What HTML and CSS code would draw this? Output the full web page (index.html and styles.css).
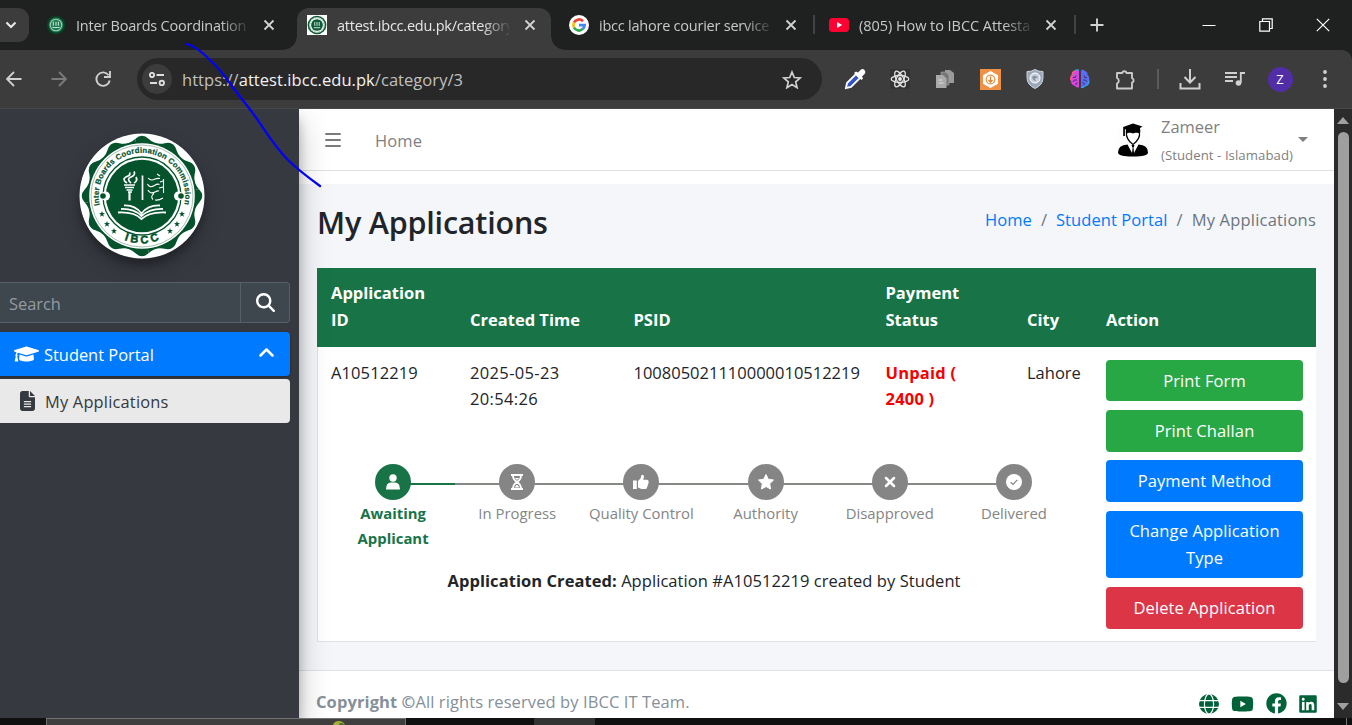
FILE: index.html
```html
<!DOCTYPE html>
<html lang="en">
<head>
<meta charset="utf-8">
<title>My Applications</title>
<link rel="stylesheet" href="styles.css">
</head>
<body>
<svg class="defs" width="0" height="0">
  <defs>
    <path id="lobes" d="M57.100-6.800Q63.500 0 57.100 6.800Q50.710 13.590 52.850 22.670Q54.990 31.750 46.060 34.440Q37.120 37.120 34.440 46.060Q31.750 54.990 22.670 52.850Q13.590 50.710 6.800 57.100L0 0z"/>
    <symbol id="seal" viewBox="-63 -63 126 126">
      <circle r="62.500" fill="#fff"/>
      <g fill="#05532d"><circle r="54.500"/><use href="#lobes"/><use href="#lobes" transform="rotate(90)"/><use href="#lobes" transform="rotate(180)"/><use href="#lobes" transform="rotate(270)"/></g>
      <circle r="52.800" fill="#fff"/>
      <circle r="51" fill="none" stroke="#7fa892" stroke-width=".7"/>
      <circle r="39" fill="none" stroke="#05532d" stroke-width="1.300"/>
      <circle r="36.200" fill="#05532d"/>
      <circle cx="-36.500" r="4.500" fill="#fff"/><circle cx="36.500" r="4.500" fill="#fff"/>
      <circle cx="-39" r="2.800" fill="#05532d"/><circle cx="39" r="2.800" fill="#05532d"/>
    </symbol>
    <symbol id="x" viewBox="0 0 12 12"><path d="M1.500 1.500l9 9M10.500 1.500l-9 9" stroke="currentColor" stroke-width="1.800" fill="none"/></symbol>
  </defs>
</svg>

<div class="window">
  <header class="tabstrip">
    <div class="tab-search"><svg width="12" height="8" viewBox="0 0 12 8"><path d="M1.500 1.500L6 6l4.500-4.500" fill="none" stroke="#e8e8e8" stroke-width="2.100"/></svg></div>
    <div class="tab tab-one">
      <svg class="fav" viewBox="-63 -63 126 126"><circle r="60" fill="#0b3d26"/><circle r="47" fill="#1f7c50"/><circle r="36" fill="none" stroke="#9fc9b3" stroke-width="7"/><path d="M-17-20v25M0-20v25M15-20v25M-22 16H22" stroke="#bfe0cf" stroke-width="7"/></svg>
      <span class="tab-title">Inter Boards Coordination</span><svg class="close"><use href="#x"/></svg>
    </div>
    <div class="tab tab-active">
      <svg class="fav boxed" viewBox="-63 -63 126 126"><circle r="59" fill="#0d5a35"/><circle r="49" fill="#fff"/><circle r="44" fill="none" stroke="#6a9c83" stroke-width="5" stroke-dasharray="7 5"/><circle r="37" fill="#0d5a35"/><path d="M-14-19v25M0-19v25M14-19v25M-20 17H20" stroke="#d5e8de" stroke-width="6"/></svg>
      <span class="tab-title">attest.ibcc.edu.pk/category</span><svg class="close"><use href="#x"/></svg>
    </div>
    <div class="tab tab-three">
      <svg class="fav" viewBox="0 0 20 20"><circle cx="10" cy="10" r="10" fill="#fff"/><g fill="none" stroke-width="2.700"><path d="M14 6.200A5.600 5.600 0 0 0 5 7.500" stroke="#ea4335"/><path d="M5 7.500a5.600 5.600 0 0 0 0 5" stroke="#fbbc05"/><path d="M5 12.500a5.600 5.600 0 0 0 8.700 1.600" stroke="#34a853"/><path d="M13.700 14.100A5.600 5.600 0 0 0 15.600 10.200H10" stroke="#4285f4"/></g></svg>
      <span class="tab-title">ibcc lahore courier service</span><svg class="close"><use href="#x"/></svg>
    </div>
    <div class="tab tab-four">
      <svg class="fav" viewBox="0 0 20 20"><rect y="3" width="20" height="14" rx="3.500" fill="#ff0033"/><path d="M8 7l5.200 3L8 13z" fill="#fff"/></svg>
      <span class="tab-title">(805) How to IBCC Attesta</span><svg class="close"><use href="#x"/></svg>
    </div>
    <svg class="plus" width="14" height="14" viewBox="0 0 14 14"><path d="M7 .5v13M.5 7h13" stroke="#d2d2d2" stroke-width="1.900"/></svg>
    <div class="win-controls">
      <svg width="14" height="14"><path d="M.5 7.500h13" stroke="#fff"/></svg>
      <svg width="14" height="14" fill="none" stroke="#fff"><path d="M.8 3.500h9.700v9.700H.8zM3.500 3.500V.8h9.700v9.700h-2.700" stroke-width="1.200"/></svg>
      <svg width="14" height="14"><path d="M.8.8l12.400 12.400M13.200.8L.8 13.200" stroke="#fff" stroke-width="1.200"/></svg>
    </div>
  </header>

  <div class="toolbar">
    <nav class="nav-buttons">
      <svg width="16" height="16" viewBox="0 0 16 16" fill="none" stroke="#d0d0d0" stroke-width="1.800"><path d="M15.500 8H1.500M8 1L1 8l7 7"/></svg>
      <svg width="16" height="16" viewBox="0 0 16 16" fill="none" stroke="#7b7b7b" stroke-width="1.800"><path d="M.5 8h14M8 1l7 7-7 7"/></svg>
      <svg width="16" height="16" viewBox="0 0 16 16" fill="none" stroke="#d0d0d0" stroke-width="1.900"><path d="M13.600 4.200A6.700 6.700 0 1 0 14.700 9.500M15 0v6H9"/></svg>
    </nav>
    <div class="address">
      <span class="site-info"><svg width="16" height="14" viewBox="0 0 16 14" fill="none" stroke="#dedede" stroke-width="1.900"><circle cx="3" cy="3" r="2.100"/><path d="M7.500 3H15M1 11h7"/><circle cx="12.800" cy="11" r="2.200"/></svg></span>
      <span class="url">https://<b>attest.ibcc.edu.pk</b>/category/3</span>
      <svg class="star" width="20" height="19" viewBox="0 0 20 19"><path d="M10 2l2.300 5.500 5.900.5-4.500 3.900 1.400 5.800L10 14.600l-5.100 3.100 1.400-5.800L1.800 8l5.900-.5z" fill="none" stroke="#d0d0d0" stroke-width="1.700"/></svg>
    </div>
    <div class="extensions">
      <svg width="22" height="22" viewBox="0 0 22 22"><path d="M2 20l1-5L12 6l4 4-9 9z" fill="#3554c4" stroke="#fff" stroke-width="1.800"/><path d="M10 5l2-1.500 2 1L17 1.500q2-1 3.500.5t.5 3.500L18 8.500l1 2-1.500 1.500z" fill="#fff"/></svg>
      <svg width="22" height="22" viewBox="-11 -11 22 22"><rect x="-10" y="-10" width="20" height="20" fill="#333"/><g fill="none" stroke="#e2e2e2" stroke-width="1.300"><ellipse rx="8.800" ry="3.500"/><ellipse rx="8.800" ry="3.500" transform="rotate(60)"/><ellipse rx="8.800" ry="3.500" transform="rotate(120)"/></g><circle r="1.900" fill="#eee"/></svg>
      <svg width="20" height="20" viewBox="0 0 20 20"><path d="M10 1h5l4 3v10h-9z" fill="#9a9a9a"/><path d="M6 3h5l3 3v10H6z" fill="#777" stroke="#aaa" stroke-width=".6"/><path d="M1 6h7l3.500 3.500V19H1z" fill="#aaa"/><path d="M3.500 11h4M3.500 14h5" stroke="#ddd"/></svg>
      <svg width="21" height="21" viewBox="0 0 21 21"><path fill="#ee9144" d="M0 0h21v21H0z"/><path d="M10.500 2l7.500 4.300v8.400L10.500 19 3 14.700V6.300z" fill="#fff"/><circle cx="10.500" cy="10.500" r="4.300" fill="none" stroke="#e79145" stroke-width="1.200"/><path d="M10.500 7.500v5.500M8.500 11l2 2 2-2" fill="none" stroke="#e08330" stroke-width="1.300"/></svg>
      <svg width="18" height="20" viewBox="0 0 18 20"><path d="M9 .5q4 2.400 8 2v6Q17 16 9 19.500 1 16 1 8.500v-6q4 .4 8-2z" fill="#9ba8ba" stroke="#cbd2dd"/><circle cx="9" cy="9" r="5" fill="#c7cfda" stroke="#fff"/><path d="M6 8q4-3 6 1-2-1-3 1l1 2q-3 0-4-4z" fill="#8392a7"/></svg>
      <svg width="20" height="20" viewBox="0 0 20 20"><path d="M9 1.500Q7 0 5 2 2 3 2.500 6 0 8 1 11.500 1 16 5 17q2 2.500 4 1z" fill="#d945de"/><path d="M11 1.500q2-1.500 4 .5 3 1 2.500 4 2.500 2 1.500 5.500 0 4.500-4 5.500-2 2.500-4 1z" fill="#5b6df6"/><path d="M9 1.500Q7 0 5 2 2 3 2.500 6 4 5 5 6M11 18q2 1.500 4-1 4-1 4-5.500" fill="none" stroke="#35a4f2" stroke-width="1.200"/><path d="M5 2Q2 3 2.500 6 0 8 1 11.500" fill="none" stroke="#fb5a78" stroke-width="1.500"/><path d="M3 8.500q3 1 3-2M3 13q1-3 4-2M6 16q-1-2 1.500-2.500M17 8.500q-3 1-3-2M17 13q-1-3-4-2M14 16q1-2-1.500-2.500" fill="none" stroke="#3c3264"/></svg>
      <svg width="21" height="21" viewBox="0 0 21 21"><path d="M2 4h5.200a2.200 2.200 0 0 1 4.300 0H17v5.200a2.300 2.300 0 0 1 0 4.400V19.500H2v-5a3 3 0 0 0 0-5.500z" fill="none" stroke="#c9c9c9" stroke-width="1.900" stroke-linejoin="round"/></svg>
      <i class="divider"></i>
      <svg width="22" height="21" viewBox="0 0 22 21" fill="none" stroke="#d0d0d0" stroke-width="2"><path d="M11 0v13M5.500 8L11 13.500 16.500 8M1.500 14v5.500h19V14"/></svg>
      <svg width="20" height="16" viewBox="0 0 20 16" fill="none" stroke="#d0d0d0" stroke-width="1.800"><path d="M0 2h12M0 6h12M0 10h8M15.800 12V2H20"/><circle cx="13.500" cy="12" r="2.800" fill="#d0d0d0" stroke="none"/></svg>
      <span class="profile">Z</span>
      <svg width="4" height="18" viewBox="0 0 4 18" fill="#d0d0d0"><circle cx="2" cy="2" r="1.900"/><circle cx="2" cy="9" r="1.900"/><circle cx="2" cy="16" r="1.900"/></svg>
    </div>
  </div>

  <div class="viewport">
    <aside class="sidebar">
      <svg class="logo" viewBox="-63 -63 126 126">
        <use href="#seal" x="-63" y="-63" width="126" height="126"/>
        <path id="arc" d="M-42.200 9.300A43.200 43.200 0 1 1 42.200 9.300" fill="none"/>
        <path id="arcb" d="M-30 36.600A47.300 47.300 0 0 0 30 36.600" fill="none"/>
        <text class="seal-text"><textPath href="#arc" startOffset="0" textLength="153">Inter Boards Coordination Commission</textPath></text>
        <text class="seal-ibcc"><textPath href="#arcb" startOffset="52%" text-anchor="middle">IBCC</textPath></text>
        <g fill="#05532d"><path id="st" d="M0-3l.8 2.100 2.200.1L1.200.6 1.900 2.800 0 1.500-1.900 2.800-1.200.6-3-.8l2.200-.1z" transform="translate(-35 28)"/><use href="#st" x="70"/><use href="#st" x="-5" y="-10"/><use href="#st" x="75" y="-10"/><use href="#st" x="7" y="7"/><use href="#st" x="63" y="7"/></g>
        <g fill="none" stroke="#fff"><path d="M.5-20.500V4" stroke-width="1.700"/><path d="M-18-11h11M-17-8.500h9M-15.500-6h6M-14-4h4" stroke-width="1.500"/><path d="M-12.500-4V4.500" stroke-width="2.200"/><path d="M-15-13q-6-4 0-6.500 4-1.500 2.500-4M-11-13q-5-4 0-6 5-2 3-5.500M-8-13q4-2 2-6" stroke-width="1.700"/><path d="M6-18q3 3.500 7 1 2-1 5-.5M5.500-12q2 4.500 7 1.500 3-2 5-1M6-6q2 4.500 7 2 3-1.500 4-1M21.500-17V-3M11 3.500q-3-3 1-6M15-22l3 2M13 4q4 .5 8-2M18-14l3-1M17-8l4-1" stroke-width="1.100"/><path d="M-18 9.500Q-7 9-.5 17.500 6 9 18 9.500M-21 13Q-8 12.500-.5 20 8 12.500 21 13M-24 16.500Q-8 15.500-.5 23 8 15.500 24 16.500" stroke-width="1.800"/></g>
      </svg>
      <div class="search"><span class="search-input">Search</span><span class="search-btn"><svg width="19" height="19" viewBox="0 0 512 512" fill="#fff"><path d="M416 208c0 45.900-14.900 88.300-40 122.700L502.600 457.400c12.500 12.500 12.500 32.800 0 45.300s-32.800 12.500-45.300 0L330.700 376c-34.400 25.200-76.800 40-122.700 40C93.100 416 0 322.900 0 208S93.100 0 208 0S416 93.100 416 208zM208 352a144 144 0 1 0 0-288 144 144 0 1 0 0 288z"/></svg></span></div>
      <a class="menu portal"><svg width="25" height="20" viewBox="0 0 640 512" fill="#fff"><path d="M622.340 153.200L343.400 67.500c-15.200-4.670-31.600-4.670-46.790 0L17.660 153.200c-23.540 7.230-23.540 38.360 0 45.590l48.630 14.940c-10.670 13.190-17.230 29.280-17.880 46.900C38.780 266.150 32 276.110 32 288c0 10.780 5.680 19.850 13.860 25.650L20.330 428.530C18.110 438.520 25.710 448 35.940 448h56.110c10.240 0 17.840-9.480 15.620-19.470L82.140 313.650C90.320 307.850 96 298.780 96 288c0-11.570-6.470-21.250-15.660-26.870.76-15.020 8.440-28.300 20.690-36.720L296.600 284.500c9.060 2.780 26.440 6.250 46.790 0l278.950-85.700c23.550-7.240 23.550-38.360 0-45.600zM352.790 315.090c-28.530 8.760-52.840 3.920-65.590 0l-145.020-44.550L128 384c0 35.350 85.960 64 192 64s192-28.650 192-64l-14.180-113.470-145.030 44.560z"/></svg><span>Student Portal</span><svg class="chev" width="15" height="9" viewBox="0 0 15 9"><path d="M1.500 7.500l6-6 6 6" fill="none" stroke="#fff" stroke-width="2.500" stroke-linecap="round" stroke-linejoin="round"/></svg></a>
      <a class="menu apps"><svg width="15" height="20" viewBox="0 0 384 512" fill="#343a40"><path d="M64 0C28.700 0 0 28.700 0 64V448c0 35.300 28.700 64 64 64H320c35.300 0 64-28.700 64-64V160H256c-17.700 0-32-14.300-32-32V0H64zM256 0V128H384L256 0zM112 256H272c8.800 0 16 7.200 16 16s-7.200 16-16 16H112c-8.800 0-16-7.200-16-16s7.200-16 16-16zm0 64H272c8.800 0 16 7.200 16 16s-7.200 16-16 16H112c-8.800 0-16-7.200-16-16s7.200-16 16-16zm0 64H272c8.800 0 16 7.200 16 16s-7.200 16-16 16H112c-8.800 0-16-7.200-16-16s7.200-16 16-16z"/></svg><span>My Applications</span></a>
    </aside>

    <main class="main">
      <nav class="navbar">
        <svg width="16" height="14" viewBox="0 0 16 14" stroke="#7b7b7b" stroke-width="1.900" stroke-linecap="round"><path d="M1 1h14M1 7h14M1 13h14"/></svg>
        <span class="nav-home">Home</span>
        <div class="user">
          <svg width="36" height="36" viewBox="0 0 36 36"><circle cx="18" cy="18" r="17.500" fill="#fdfdfd"/><path d="M11.500 10Q10.500 17 18 22.500 25.500 17 24.500 10z" fill="#fff" stroke="#000" stroke-width="1.200"/><path d="M18 1.500l9.500 3-2.500 1.500q.8 3-.2 6.500-1.800-3.500-6.800-1-5-2.500-6.800 1-.6-3-.3-5l-1-.4v7H8.200V5z"/><path d="M12.500 22.500L17 31l.7-5.500h.8L19 31l4.500-8.500q9.500.5 9.500 8 0 4-15 4t-15-4q0-7.500 9.500-8z"/><path d="M16.500 23h3l-.8 2.500h-1.400z"/></svg>
          <div class="user-text"><span class="user-name">Zameer</span><span class="user-role">(Student - Islamabad)</span></div>
          <i class="caret"></i>
        </div>
      </nav>
      <div class="strip"></div>
      <section class="content">
        <div class="head">
          <h1>My Applications</h1>
          <div class="crumbs"><a>Home</a><i>/</i><a>Student Portal</a><i>/</i><span>My Applications</span></div>
        </div>
        <div class="table">
          <div class="row thead"><b>Application<br>ID</b><b>Created Time</b><b>PSID</b><b>Payment<br>Status</b><b>City</b><b>Action</b></div>
          <div class="row tbody">
            <span class="aid">A10512219</span><span class="when">2025-05-23<br>20:54:26</span><span>100805021110000010512219</span><span class="unpaid">Unpaid (<br>2400 )</span><span>Lahore</span>
            <div class="actions">
              <a class="btn green">Print Form</a><a class="btn green">Print Challan</a><a class="btn blue">Payment Method</a><a class="btn blue">Change Application<br>Type</a><a class="btn red">Delete Application</a>
            </div>
            <div class="progress">
              <div class="steps">
                <div class="step done"><em><svg viewBox="0 0 16 16"><circle cx="8" cy="4" r="3.700"/><path d="M1 15.500q0-7 5-7h4q5 0 5 7z"/></svg></em><span>Awaiting<br>Applicant</span></div>
                <div class="step"><em><svg viewBox="0 0 16 16"><path d="M2 0h12v2H2zM2 14h12v2H2z"/><path d="M4 1.500q0 4 4 6.500 4-2.500 4-6.500M4 14.500q0-4 4-6.500 4 2.500 4 6.500" fill="none" stroke="#fff" stroke-width="1.900"/><path d="M5.500 13.500L8 10.500l2.500 3zM6 4h4L8 6z"/></svg></em><span>In Progress</span></div>
                <div class="step"><em><svg viewBox="0 0 16 16"><path d="M0 6.500h3.800V15H0zM5 7l2.500-2.500L8.500 1q2.500-.8 2.500 2l-.8 2.700H14q2 .3 1.600 2 .4 1-.4 1.900.3 1.200-.6 2 .2 1.200-.7 1.900Q14 15 12 15H8.500L5 13.500z"/></svg></em><span>Quality Control</span></div>
                <div class="step"><em><svg viewBox="0 0 16 16"><path d="M8 .5l2.300 4.800 5.200.7-3.800 3.700.9 5.300L8 12.500 3.400 15l.9-5.300L.5 6l5.200-.7z" stroke="#fff" stroke-linejoin="round"/></svg></em><span>Authority</span></div>
                <div class="step"><em><svg viewBox="0 0 16 16"><path d="M4 4l8 8M12 4l-8 8" fill="none" stroke="#fff" stroke-width="2.500" stroke-linecap="round"/></svg></em><span>Disapproved</span></div>
                <div class="step"><em><svg viewBox="0 0 16 16"><circle cx="8" cy="8" r="8"/><path d="M4.700 8.200l2.300 2.200 4.300-4.500" fill="none" stroke="#858585" stroke-width="1.200"/></svg></em><span>Delivered</span></div>
              </div>
              <p class="created"><b>Application Created:</b> Application #A10512219 created by Student</p>
            </div>
          </div>
        </div>
      </section>
      <footer class="footer">
        <span class="copy"><b>Copyright ©</b>All rights reserved by IBCC IT Team.</span>
        <div class="social">
          <svg width="20" height="20" viewBox="0 0 20 20"><circle cx="10" cy="10" r="10" fill="#006239"/><g fill="none" stroke="#fff" stroke-width="1.200"><ellipse cx="10" cy="10" rx="4.600" ry="10"/><path d="M0 6.700h20M0 13.300h20"/></g></svg>
          <svg width="23" height="20" viewBox="0 0 576 512"><path d="M549.655 124.083c-6.281-23.650-24.787-42.276-48.284-48.597C458.781 64 288 64 288 64S117.220 64 74.629 75.486c-23.497 6.322-42.003 24.947-48.284 48.597-11.412 42.867-11.412 132.305-11.412 132.305s0 89.438 11.412 132.305c6.281 23.650 24.787 41.500 48.284 47.821C117.220 448 288 448 288 448s170.780 0 213.371-11.486c23.497-6.321 42.003-24.171 48.284-47.821 11.412-42.867 11.412-132.305 11.412-132.305s0-89.438-11.412-132.305zm-317.510 213.508V175.185l142.739 81.205-142.739 81.201z"/></svg>
          <svg width="21" height="21" viewBox="0 0 512 512"><path d="M504 256C504 119 393 8 256 8S8 119 8 256c0 123.780 90.690 226.380 209.250 245V327.690h-63V256h63v-54.640c0-62.150 37-96.480 93.670-96.480 27.140 0 55.520 4.840 55.520 4.840v61h-31.280c-30.800 0-40.410 19.120-40.410 38.730V256h68.780l-11 71.690h-57.780V501C413.310 482.380 504 379.780 504 256z"/></svg>
          <svg width="18" height="20" viewBox="0 0 448 512"><path d="M416 32H31.900C14.300 32 0 46.500 0 64.300v383.400C0 465.500 14.300 480 31.900 480H416c17.600 0 32-14.500 32-32.300V64.300c0-17.800-14.400-32.300-32-32.300zM135.400 416H69V202.200h66.500V416zm-33.200-243c-21.300 0-38.500-17.300-38.500-38.500S80.900 96 102.200 96c21.200 0 38.500 17.300 38.500 38.500 0 21.300-17.200 38.500-38.500 38.500zm282.100 243h-66.400V312c0-24.800-.5-56.700-34.500-56.700-34.600 0-39.900 27-39.900 54.900V416h-66.400V202.200h63.700v29.200h.9c8.900-16.800 30.600-34.500 62.900-34.500 67.200 0 79.700 44.300 79.700 101.900V416z"/></svg>
        </div>
      </footer>
    </main>
    <div class="scrollbar"><i class="up"></i><i class="thumb"></i><i class="down"></i></div>
  </div>

  <div class="taskbar"><i class="task"><svg width="18" height="6" viewBox="0 0 18 6"><path d="M4 6q1-4 6-4 4 0 6 4z" fill="#a4ae35"/><path d="M10 6q1-3 3-2l3 2z" fill="#4d6b30"/></svg></i><i class="task-two"></i><i class="peek"></i></div>
  <svg class="ink" width="140" height="146" viewBox="0 0 140 146"><path d="M3 2C12 4 20 12 26 18C36 27 42 36 48 44C56 55 62 62 68 70C78 83 88 102 104 118C114 128 125 136 136 144" fill="none" stroke="#0000fb" stroke-width="2.300" stroke-linecap="round"/></svg>
</div>
</body>
</html>
```
FILE: styles.css
```css
* { box-sizing: border-box; }
body { margin: 0; font-family: "Open Sans", "Noto Sans", sans-serif; overflow: hidden; }
i, em { font-style: normal; }
svg { display: block; flex: none; }
.defs { position: absolute; }
.window { position: relative; width: 1352px; height: 725px; display: flex; flex-direction: column; overflow: hidden; background: #1f2120; }

/* Browser tabs */
.tabstrip { height: 50px; display: flex; align-items: center; color: #c8c8c8; }
.tab-search { width: 29px; height: 34px; background: #3c3c3c; border-radius: 0 11px 11px 0; display: flex; align-items: center; padding-left: 5px; }
.tab { height: 42px; align-self: flex-end; display: flex; align-items: center; padding-bottom: 8px; position: relative; }
.tab-one { width: 268px; padding-left: 17px; }
.tab-active { width: 254px; padding-left: 10px; background: #3c3c3c; border-radius: 12px 12px 0 0; color: #e6e6e6; }
.tab-active::before, .tab-active::after { content: ""; position: absolute; bottom: 0; width: 14px; height: 14px; }
.tab-active::before { left: -14px; background: radial-gradient(circle at 0 0, transparent 13.500px, #3c3c3c 14px); }
.tab-active::after { right: -14px; background: radial-gradient(circle at 100% 0, transparent 13.500px, #3c3c3c 14px); }
.tab-three { width: 264px; padding-left: 18px; }
.tab-four { width: 261px; padding-left: 14px; }
.tab-three::after, .tab-four::after { content: ""; position: absolute; right: 0; top: 7px; width: 2px; height: 19px; background: #424443; }
.fav { width: 20px; height: 20px; }
.boxed { background: #fff; }
.tab-title { width: 172px; margin-left: 10px; font-size: 14.500px; white-space: nowrap; letter-spacing: -.23px; -webkit-mask-image: linear-gradient(90deg, #000 84%, transparent 102%); mask-image: linear-gradient(90deg, #000 84%, transparent 102%); }
.tab-four .tab-title { letter-spacing: -.05px; }
.close { width: 12px; height: 12px; margin-left: 15px; color: #d2d2d2; }
.tab-three .close, .tab-four .close { margin-left: 14px; }
.plus { margin-left: 14px; }
.win-controls { margin-left: auto; width: 128px; margin-right: 22px; display: flex; justify-content: space-between; }

/* Browser toolbar */
.toolbar { height: 59px; background: #3c3c3c; border-bottom: 1px solid #484848; border-radius: 0 10px 0 0; display: flex; align-items: center; }
.nav-buttons { width: 137px; padding-left: 6px; display: flex; gap: 28.500px; }
.address { width: 685px; height: 42px; border-radius: 21px; background: #282828; display: flex; align-items: center; padding: 0 20px 0 5px; }
.site-info { width: 30px; height: 30px; border-radius: 50%; background: #3c3c3c; display: flex; align-items: center; justify-content: center; }
.url { margin-left: 10px; color: #c0c0c0; font-size: 16.500px; letter-spacing: .05px; }
.url b { font-weight: 400; color: #f2f2f2; }
.star { margin-left: auto; }
.extensions { padding-left: 10.500px; display: grid; grid-template-columns: repeat(7, 45px) 20px repeat(4, 45px); align-items: center; justify-items: center; }
.divider { width: 2px; height: 20px; background: #5b5b5b; }
.profile { width: 25px; height: 25px; border-radius: 50%; background: #512da8; color: #fff; font: 13px "Noto Sans", sans-serif; display: flex; align-items: center; justify-content: center; }

/* Page */
.viewport { height: 609px; display: flex; background: #fff; overflow: hidden; }
.sidebar { position: relative; z-index: 2; width: 299px; background: #363940; box-shadow: 0 14px 28px rgba(0,0,0,.25), 0 10px 10px rgba(0,0,0,.22); padding-top: 24px; font-size: 16.400px; }
.logo { width: 126px; height: 126px; margin-left: 79px; border-radius: 50%; box-shadow: 0 10px 20px rgba(0,0,0,.19), 0 6px 6px rgba(0,0,0,.23); }
.seal-text { font: bold 7.800px "Liberation Sans", sans-serif; fill: #05532d; stroke: #05532d; stroke-width: .2; }
.seal-ibcc { font: bold 11px "Liberation Sans", sans-serif; fill: #05532d; letter-spacing: 3px; stroke: #05532d; stroke-width: .5; }
.search { width: 290px; height: 41px; margin-top: 23px; display: flex; background: #3f474e; border: 1px solid #56606a; border-left: 0; border-radius: 0 4px 4px 0; }
.search-input { flex: 1; padding-left: 9px; line-height: 41px; color: #939ba2; }
.search-btn { width: 49px; border-left: 1px solid #56606a; display: flex; align-items: center; justify-content: center; }
.menu { width: 290px; height: 44px; display: flex; align-items: center; border-radius: 0 4px 4px 0; }
.portal { margin-top: 9px; background: #007bff; color: #fff; padding: 0 16.500px 0 14px; box-shadow: 0 1px 3px rgba(0,0,0,.3); }
.portal span { margin-left: 5px; }
.portal .chev { margin-left: auto; margin-top: -4px; }
.apps { margin-top: 3px; background: #e9e9e9; color: #343a40; padding-left: 20px; }
.apps span { margin-left: 10px; letter-spacing: .2px; }

.main { width: 1035px; display: flex; flex-direction: column; }
.main > * { flex: none; }
.navbar { height: 62px; border-bottom: 1px solid #dee2e6; display: flex; align-items: center; padding: 0 26px; color: #7f7f7f; font-size: 16.500px; }
.nav-home { margin-left: 34px; margin-top: 2px; letter-spacing: .1px; }
.user { margin-left: auto; display: flex; align-items: center; }
.user-text { margin-left: 10px; display: flex; flex-direction: column; }
.user-name { line-height: 28px; margin-top: 2px; }
.user-role { font-size: 13.200px; line-height: 28px; letter-spacing: .06px; }
.caret { margin-left: 5px; border: 5px solid transparent; border-top-color: #7f7f7f; border-bottom: 0; }
.strip { height: 13px; }
.content { height: 486px; background: #f4f6f9; padding: 0 18px; color: #212529; }
.head { height: 84px; display: flex; justify-content: space-between; }
h1 { margin: 17px 0 0; font-size: 30.500px; line-height: 42px; font-weight: 600; letter-spacing: -.2px; }
.crumbs { margin-top: 24px; line-height: 24px; font-size: 16.500px; letter-spacing: .07px; color: #6c757d; display: flex; gap: 9px; }
.crumbs a { color: #007bff; }
.crumbs span { letter-spacing: .2px; }

.table { width: 999px; height: 374px; background: #fff; border: 1px solid #dee2e6; border-top: 0; border-right: 0; font-size: 16.500px; line-height: 26.400px; }
.row { display: grid; grid-template-columns: 139px 163.500px 252px 141.500px 79px 1fr; }
.row > b, .row > span { padding-left: 14px; }
.thead { height: 79px; margin-left: -1px; background: #187447; color: #fff; align-items: end; padding-bottom: 14px; }
.tbody { height: 294px; grid-template-rows: 117px 1fr; padding-top: 13px; margin-left: -1px; }
.row > .aid { letter-spacing: .1px; }
.row > .when { letter-spacing: .35px; }
.unpaid { color: #f40000; font-weight: 700; letter-spacing: .2px; }
.actions { grid-column: 6; grid-row: 1 / 3; padding: 0 13px 0 14px; display: flex; flex-direction: column; gap: 8.800px; }
.btn { border-radius: 4px; color: #fff; text-align: center; padding: 7.500px 0; letter-spacing: .1px; }
.green { background: #28a745; }
.blue { background: #007bff; }
.red { background: #dc3545; }
.progress { grid-row: 2; grid-column: 1 / 6; padding-left: 14px; width: 760px; margin-top: -13px; }
.steps { width: 745px; height: 91px; display: grid; grid-template-columns: repeat(6, 1fr); font-size: 14.900px; line-height: 25px; color: #858585; text-align: center; }
.step { display: flex; flex-direction: column; align-items: center; position: relative; }
.step::before { content: ""; position: absolute; left: 0; right: 0; top: 19px; height: 2px; background: #858a85; }
.step:first-child::before { left: 50%; background: #187447; }
.step:last-child::before { right: 50%; }
.step em { position: relative; width: 36px; height: 36px; border-radius: 50%; background: #858585; display: flex; align-items: center; justify-content: center; margin-bottom: 1px; }
.step em svg { width: 16px; height: 16px; fill: #fff; }
.done { color: #187447; font-weight: 700; }
.step.done em { background: #187447; }
.created { margin: 13px 0 0; text-align: center; letter-spacing: .06px; }

.footer { height: 60px; border-top: 1px solid #dee2e6; background: #fff; display: flex; justify-content: space-between; padding: 18px 17px 0; color: #869099; font-size: 16.500px; line-height: 26px; letter-spacing: .09px; }
.social { height: 21px; margin-top: 4px; display: flex; gap: 12px; align-items: center; fill: #006239; }
.scrollbar { width: 18px; background: #2b2b2b; display: flex; flex-direction: column; align-items: center; padding: 8px 0; }
.up { border: 6px solid transparent; border-top: 0; border-bottom: 7px solid #9f9f9f; }
.thumb { width: 11px; height: 552px; margin-top: 8px; border-radius: 6px; background: #9f9f9f; }
.down { margin-top: 20px; border: 6px solid transparent; border-bottom: 0; border-top: 7px solid #9f9f9f; }
.taskbar { height: 7px; background: #101010; display: flex; padding-left: 46px; }
.task { width: 360px; background: #3f3f3f; border: 1px solid #707070; border-bottom: 0; padding-left: 282px; }
.task-two { width: 61px; margin-left: 128px; background: #333; }
.peek { width: 1px; margin-left: 751px; background: #777; }
.ink { position: absolute; left: 184px; top: 42px; z-index: 5; }
```
